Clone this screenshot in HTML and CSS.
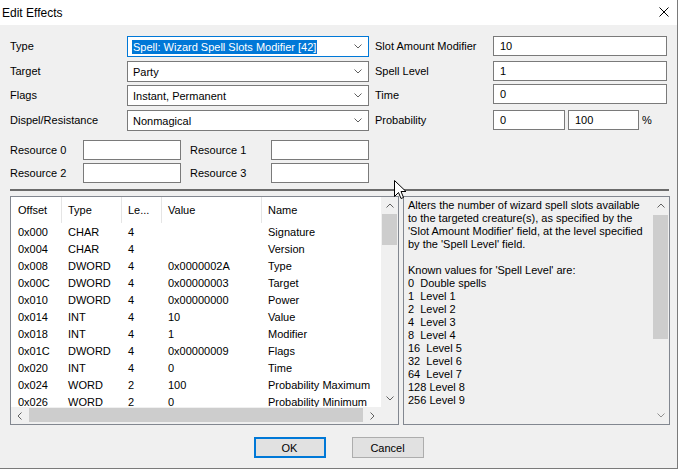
FILE: index.html
```
<!DOCTYPE html>
<html>
<head>
<meta charset="utf-8">
<link rel="stylesheet" href="styles.css">
</head>
<body>
<div class="window">
  <div class="titlebar">
    <span class="title">Edit Effects</span>
    <svg class="close" width="10" height="10" viewBox="0 0 10 10"><path d="M0.5 0.5 L9.5 9.5 M9.5 0.5 L0.5 9.5" stroke="#000" stroke-width="1" fill="none"/></svg>
  </div>
  <div class="content">
    <div class="form">
      <span class="lbl">Type</span>
      <div class="combo focus"><span class="sel">Spell: Wizard Spell Slots Modifier [42]</span><svg class="chev" width="8" height="5" viewBox="0 0 8 5"><polyline points="0.5,0.5 4,4 7.5,0.5" fill="none" stroke="#606060"/></svg></div>
      <span></span>
      <span class="lbl">Slot Amount Modifier</span>
      <div class="field">10</div>

      <span class="lbl">Target</span>
      <div class="combo"><span>Party</span><svg class="chev" width="8" height="5" viewBox="0 0 8 5"><polyline points="0.5,0.5 4,4 7.5,0.5" fill="none" stroke="#606060"/></svg></div>
      <span></span>
      <span class="lbl">Spell Level</span>
      <div class="field">1</div>

      <span class="lbl">Flags</span>
      <div class="combo"><span>Instant, Permanent</span><svg class="chev" width="8" height="5" viewBox="0 0 8 5"><polyline points="0.5,0.5 4,4 7.5,0.5" fill="none" stroke="#606060"/></svg></div>
      <span></span>
      <span class="lbl">Time</span>
      <div class="field time">0</div>

      <span class="lbl">Dispel/Resistance</span>
      <div class="combo"><span>Nonmagical</span><svg class="chev" width="8" height="5" viewBox="0 0 8 5"><polyline points="0.5,0.5 4,4 7.5,0.5" fill="none" stroke="#606060"/></svg></div>
      <span></span>
      <span class="lbl">Probability</span>
      <div class="prob"><div class="field p1">0</div><div class="field p2">100</div><span class="pct">%</span></div>
    </div>

    <div class="resources">
      <span class="lbl">Resource 0</span><div class="field"></div><span></span><span class="lbl">Resource 1</span><div class="field"></div>
      <span class="lbl">Resource 2</span><div class="field"></div><span></span><span class="lbl">Resource 3</span><div class="field"></div>
    </div>

    <div class="sep"></div>

    <div class="panels">
      <div class="list">
        <div class="listview">
          <div class="lrow head"><span>Offset</span><span>Type</span><span>Le...</span><span>Value</span><span>Name</span></div>
          <div class="lrow"><span>0x000</span><span>CHAR</span><span>4</span><span></span><span>Signature</span></div>
          <div class="lrow"><span>0x004</span><span>CHAR</span><span>4</span><span></span><span>Version</span></div>
          <div class="lrow"><span>0x008</span><span>DWORD</span><span>4</span><span>0x0000002A</span><span>Type</span></div>
          <div class="lrow"><span>0x00C</span><span>DWORD</span><span>4</span><span>0x00000003</span><span>Target</span></div>
          <div class="lrow"><span>0x010</span><span>DWORD</span><span>4</span><span>0x00000000</span><span>Power</span></div>
          <div class="lrow"><span>0x014</span><span>INT</span><span>4</span><span>10</span><span>Value</span></div>
          <div class="lrow"><span>0x018</span><span>INT</span><span>4</span><span>1</span><span>Modifier</span></div>
          <div class="lrow"><span>0x01C</span><span>DWORD</span><span>4</span><span>0x00000009</span><span>Flags</span></div>
          <div class="lrow"><span>0x020</span><span>INT</span><span>4</span><span>0</span><span>Time</span></div>
          <div class="lrow"><span>0x024</span><span>WORD</span><span>2</span><span>100</span><span>Probability Maximum</span></div>
          <div class="lrow"><span>0x026</span><span>WORD</span><span>2</span><span>0</span><span>Probability Minimum</span></div>
        </div>
        <div class="vscroll">
          <div class="sbtn"><svg width="8" height="5" viewBox="0 0 8 5"><polyline points="0.5,4.5 4,1 7.5,4.5" fill="none" stroke="#606060"/></svg></div>
          <div class="track"><div class="vthumb list-thumb"></div></div>
          <div class="sbtn"><svg width="8" height="5" viewBox="0 0 8 5"><polyline points="0.5,0.5 4,4 7.5,0.5" fill="none" stroke="#606060"/></svg></div>
        </div>
        <div class="hscroll">
          <div class="sbtn"><svg width="5" height="8" viewBox="0 0 5 8"><polyline points="4.5,0.5 1,4 4.5,7.5" fill="none" stroke="#606060"/></svg></div>
          <div class="htrack"><div class="hthumb"></div></div>
          <div class="sbtn"><svg width="5" height="8" viewBox="0 0 5 8"><polyline points="0.5,0.5 4,4 0.5,7.5" fill="none" stroke="#606060"/></svg></div>
        </div>
        <div class="corner"></div>
      </div>
      <div class="desc">
<div class="desc-text">Alters the number of wizard spell slots available
to the targeted creature(s), as specified by the
'Slot Amount Modifier' field, at the level specified
by the 'Spell Level' field.

Known values for 'Spell Level' are:
0  Double spells
1  Level 1
2  Level 2
4  Level 3
8  Level 4
16  Level 5
32  Level 6
64  Level 7
128 Level 8
256 Level 9</div>
        <div class="vscroll">
          <div class="sbtn"><svg width="8" height="5" viewBox="0 0 8 5"><polyline points="0.5,4.5 4,1 7.5,4.5" fill="none" stroke="#606060"/></svg></div>
          <div class="track"><div class="vthumb desc-thumb"></div></div>
          <div class="sbtn"><svg width="8" height="5" viewBox="0 0 8 5"><polyline points="0.5,0.5 4,4 7.5,0.5" fill="none" stroke="#909090"/></svg></div>
        </div>
      </div>
    </div>

    <div class="buttons">
      <div class="btn default">OK</div>
      <div class="btn">Cancel</div>
    </div>
  </div>
  <svg class="cursor" width="13" height="20" viewBox="0 0 13 20"><path d="M0.5 0.5 L0.5 16.5 L4.5 12.5 L7 18.5 L9.5 17.5 L7 11.5 L12 11.5 Z" fill="#fff" stroke="#000" stroke-width="1" stroke-linejoin="miter"/></svg>
</div>
</body>
</html>
```
FILE: styles.css
```
html, body {
  margin: 0;
  padding: 0;
  background: #ffffff;
}
body {
  font-family: "Liberation Sans", Arial, sans-serif;
  font-size: 11px;
  color: #000;
}
.window {
  position: relative;
  width: 677px;
  height: 468px;
  border-right: 1px solid #7a7a7a;
  border-bottom: 1px solid #7a7a7a;
  background: #f0f0f0;
  display: flex;
  flex-direction: column;
}
.titlebar {
  height: 25px;
  background: #ffffff;
  display: flex;
  align-items: center;
  justify-content: space-between;
  padding: 0 8px 0 2px;
  flex: none;
}
.title {
  font-size: 12px;
}
.close {
  display: block;
  margin-top: -1px;
}
.content {
  padding: 11px 10px 0 10px;
}
.form {
  display: grid;
  grid-template-columns: 117px 242px 6px 118px 174px;
  grid-template-rows: 25px 24px 25px 21px;
  align-items: start;
}
.lbl {
  white-space: nowrap;
  line-height: 21px;
}
.combo {
  height: 21px;
  box-sizing: border-box;
  border: 1px solid #7a7a7a;
  background: #fff;
  display: flex;
  align-items: center;
  justify-content: space-between;
  padding: 0 6px 0 5px;
}
.combo.focus {
  border-color: #0078d7;
}
.sel {
  background: #0078d7;
  color: #fff;
  line-height: 14px;
  margin-left: -1px;
  padding: 0 1px;
}
.chev {
  display: block;
}
.field {
  height: 20px;
  box-sizing: border-box;
  border: 1px solid #7a7a7a;
  background: #fff;
  padding-left: 6px;
  display: flex;
  align-items: center;
}
.field.time {
  margin-top: -1px;
}
.prob {
  display: flex;
  align-items: center;
  gap: 3px;
}
.prob .p1 { width: 72px; }
.prob .p2 { width: 71px; }
.resources {
  margin-top: 9px;
  display: grid;
  grid-template-columns: 73px 98px 9px 81px 98px;
  grid-auto-rows: 20px;
  row-gap: 3px;
  align-items: center;
}
.resources .lbl {
  line-height: 20px;
}
.resources .field {
  align-self: stretch;
}
.sep {
  margin-top: 6px;
  height: 2px;
  background: #6b6b6b;
  margin-right: -2px;
}
.panels {
  margin-top: 5px;
  display: flex;
  gap: 4px;
  height: 229px;
  margin-right: -3px;
}
.list {
  width: 389px;
  box-sizing: border-box;
  border: 1px solid #828790;
  background: #fff;
  display: grid;
  grid-template-columns: 1fr 17px;
  grid-template-rows: 1fr 17px;
  overflow: hidden;
}
.listview {
  overflow: hidden;
}
.lrow {
  display: grid;
  grid-template-columns: 51px 60px 40px 100px 1fr;
  height: 17px;
  align-items: center;
}
.lrow span {
  padding-left: 6px;
  white-space: nowrap;
  overflow: hidden;
}
.lrow span:first-child {
  padding-left: 7px;
}
.lrow.head {
  height: 26px;
  align-items: stretch;
}
.lrow.head span {
  display: flex;
  align-items: center;
  border-right: 1px solid #e5e5e5;
}
.lrow.head span:last-child {
  border-right: none;
}
.vscroll {
  background: #f0f0f0;
  display: flex;
  flex-direction: column;
}
.sbtn {
  flex: none;
  width: 17px;
  height: 17px;
  display: flex;
  align-items: center;
  justify-content: center;
}
.sbtn svg { display: block; }
.track {
  flex: 1;
}
.vthumb {
  background: #cdcdcd;
  margin: 0 1px;
}
.list-thumb {
  height: 31px;
}
.desc-thumb {
  margin-top: 1px;
  height: 124px;
}
.hscroll {
  background: #f0f0f0;
  display: flex;
}
.htrack {
  flex: 1;
  padding: 1px 0 2px 1px;
}
.hthumb {
  background: #cdcdcd;
  width: 334px;
  height: 100%;
}
.corner {
  background: #f0f0f0;
}
.desc {
  flex: 1;
  box-sizing: border-box;
  border: 1px solid #828790;
  background: #f0f0f0;
  display: grid;
  grid-template-columns: 1fr 17px;
  overflow: hidden;
}
.desc-text {
  white-space: pre;
  line-height: 13px;
  padding: 2px 0 0 4px;
  overflow: hidden;
}
.buttons {
  margin-top: 12px;
  display: flex;
  justify-content: center;
  gap: 26px;
}
.btn {
  width: 72px;
  height: 21px;
  box-sizing: border-box;
  border: 1px solid #adadad;
  background: #e1e1e1;
  display: flex;
  align-items: center;
  justify-content: center;
}
.btn.default {
  border: 2px solid #0078d7;
}
.cursor {
  position: absolute;
  left: 394px;
  top: 180px;
  display: block;
}
```
